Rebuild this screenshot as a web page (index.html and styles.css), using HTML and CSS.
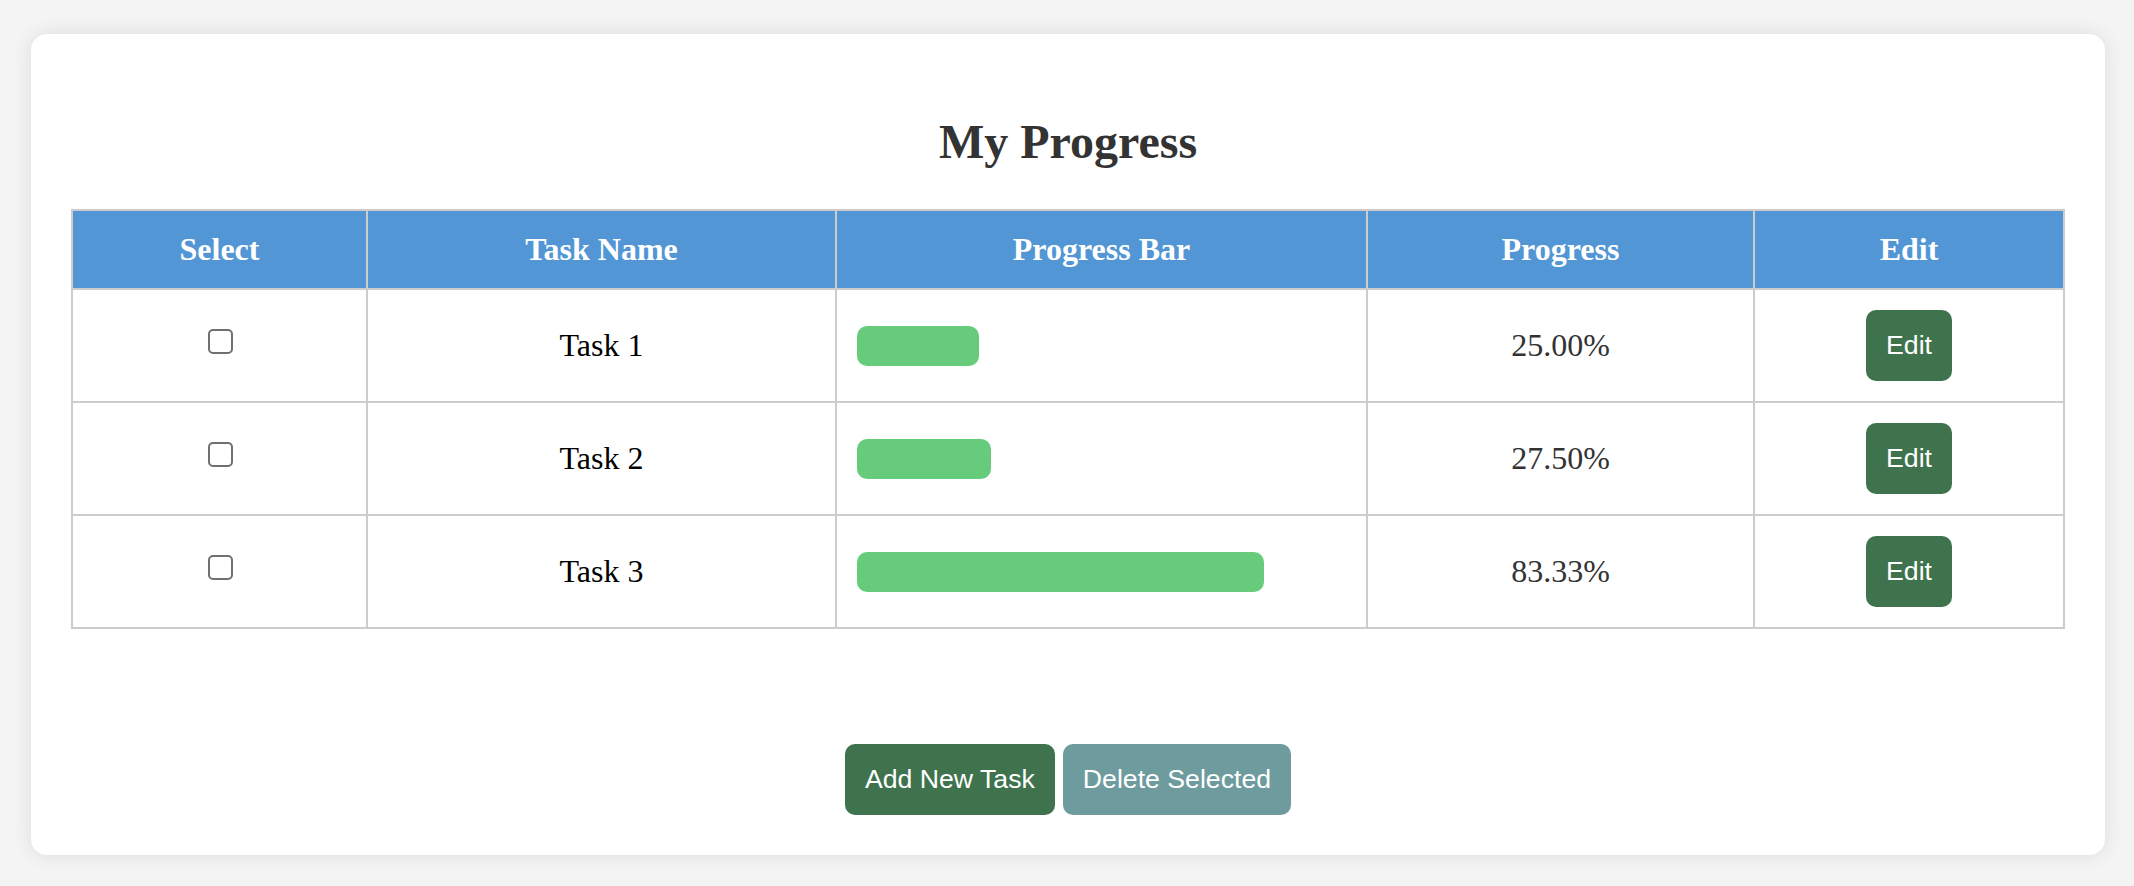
FILE: index.html
```html
<!DOCTYPE html>
<html lang="en">
<head>
<meta charset="utf-8">
<title>My Progress</title>
<link rel="stylesheet" href="styles.css">
</head>
<body>
<div class="page">
  <div class="card">
    <h2 class="title">My Progress</h2>
    <table class="tasks">
      <colgroup>
        <col class="c-select">
        <col class="c-name">
        <col class="c-bar">
        <col class="c-progress">
        <col class="c-edit">
      </colgroup>
      <thead>
        <tr>
          <th>Select</th>
          <th>Task Name</th>
          <th>Progress Bar</th>
          <th>Progress</th>
          <th>Edit</th>
        </tr>
      </thead>
      <tbody>
        <tr>
          <td class="sel"><input type="checkbox" class="check"></td>
          <td class="name">Task 1</td>
          <td class="barcell"><div class="bar" style="width:25%"></div></td>
          <td class="pct">25.00%</td>
          <td class="edit"><button class="btn btn-green">Edit</button></td>
        </tr>
        <tr>
          <td class="sel"><input type="checkbox" class="check"></td>
          <td class="name">Task 2</td>
          <td class="barcell"><div class="bar" style="width:27.5%"></div></td>
          <td class="pct">27.50%</td>
          <td class="edit"><button class="btn btn-green">Edit</button></td>
        </tr>
        <tr>
          <td class="sel"><input type="checkbox" class="check"></td>
          <td class="name">Task 3</td>
          <td class="barcell"><div class="bar" style="width:83.33%"></div></td>
          <td class="pct">83.33%</td>
          <td class="edit"><button class="btn btn-green">Edit</button></td>
        </tr>
      </tbody>
    </table>
    <div class="actions">
      <button class="btn btn-green">Add New Task</button>
      <button class="btn btn-teal">Delete Selected</button>
    </div>
  </div>
</div>
</body>
</html>
```
FILE: styles.css
```css
html, body {
  margin: 0;
  padding: 0;
  background: #f4f4f4;
}

body {
  font-family: "Liberation Serif", "Times New Roman", serif;
}

.page {
  padding: 34px 29px 32px 31px;
}

.card {
  background: #ffffff;
  border-radius: 16px;
  box-shadow: 0 0 20px rgba(0, 0, 0, 0.1);
  padding: 40px;
}

.title {
  margin: 40px 0 40px;
  font-size: 48px;
  font-weight: bold;
  color: #333333;
  text-align: center;
  line-height: normal;
}

.tasks {
  width: 100%;
  border-collapse: collapse;
  table-layout: fixed;
  font-size: 32px;
}

.c-select { width: 295px; }
.c-name { width: 469px; }
.c-bar { width: 531px; }
.c-progress { width: 387px; }
.c-edit { width: 310px; }

.tasks th,
.tasks td {
  border: 2px solid #cccccc;
  padding: 20px;
  text-align: center;
}

.tasks th {
  background: #5296d5;
  color: #ffffff;
  font-weight: bold;
}

.tasks td.name {
  color: #000000;
}

.tasks td.pct {
  color: #333333;
}

.tasks td.barcell {
  text-align: left;
}

.bar {
  height: 40px;
  background: #66cb7b;
  border-radius: 10px;
}

.check {
  -webkit-appearance: none;
  appearance: none;
  width: 25px;
  height: 25px;
  margin: 6px 6px 6px 8px;
  border: 2px solid #707070;
  border-radius: 5px;
  background: #ffffff;
  box-sizing: border-box;
  vertical-align: baseline;
  display: inline-block;
}

.btn {
  font-family: "Liberation Sans", Arial, sans-serif;
  font-size: 26.67px;
  line-height: normal;
  color: #ffffff;
  border: none;
  border-radius: 10px;
  padding: 20px 20px;
  margin: 0;
  cursor: pointer;
}

.btn-green {
  background: #3e734d;
}

.btn-teal {
  background: #6e9c9e;
}

.actions {
  margin-top: 115px;
  display: flex;
  justify-content: center;
  gap: 8px;
}
```
